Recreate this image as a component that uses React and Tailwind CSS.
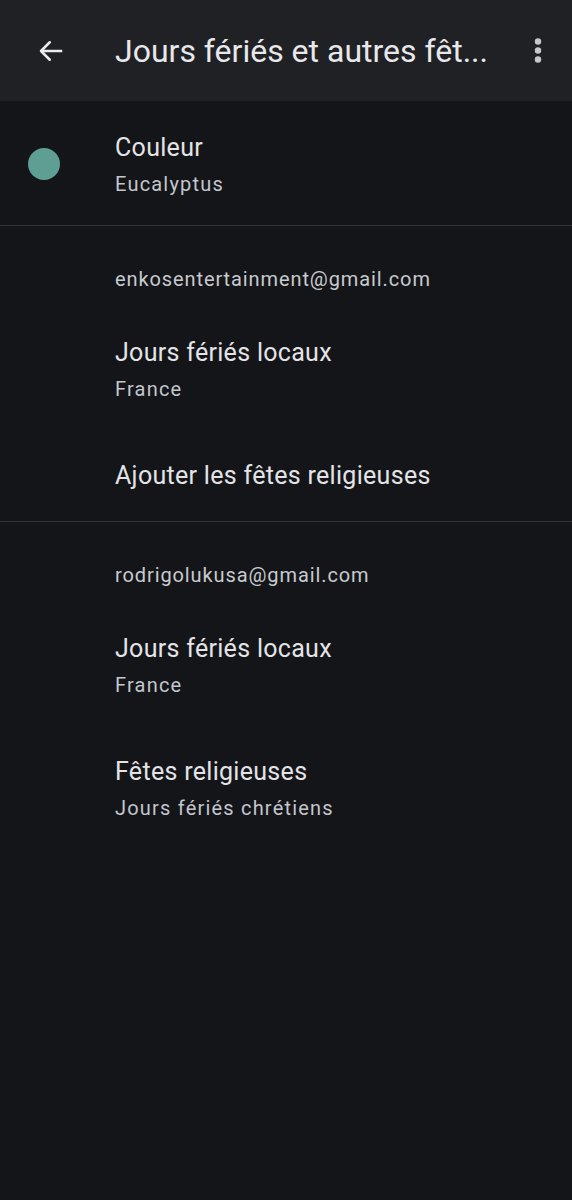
import React from "react";

function Item({ title, sub, className = "" }) {
  return (
    <div className={"pl-[115px] pr-4 " + className}>
      <div className="text-[25px] leading-[36px] tracking-[0.3px] text-[#e4e4e7]">{title}</div>
      {sub && <div className="text-[20px] leading-[36px] tracking-[1.2px] text-[#c3c6cc]">{sub}</div>}
    </div>
  );
}

export default function App() {
  return (
    <div
      className="w-[572px] h-[1200px] bg-[#131519] flex flex-col"
      style={{ fontFamily: "Roboto, 'Noto Sans', sans-serif" }}
    >
      <header className="h-[101px] bg-[#1f2125] flex items-center shrink-0">
        <div className="w-[115px] flex items-center pl-[36px]">
          <svg width="30" height="30" viewBox="0 0 24 24" fill="none" stroke="#ececef" strokeWidth="2" strokeLinecap="square">
            <path d="M20 12H5" />
            <path d="M11 5l-7 7 7 7" strokeLinecap="round" strokeLinejoin="round" />
          </svg>
        </div>
        <div className="flex-1 text-[32px] leading-[40px] text-[#e8e8eb] whitespace-nowrap">Jours fériés et autres fêt...</div>
        <div className="w-[70px] flex justify-center pl-[2px]">
          <svg width="8" height="28" viewBox="0 0 8 28">
            <circle cx="4" cy="4.5" r="3.2" fill="#c7c8cc" />
            <circle cx="4" cy="13.5" r="3.2" fill="#c7c8cc" />
            <circle cx="4" cy="22.5" r="3.2" fill="#c7c8cc" />
          </svg>
        </div>
      </header>

      <div className="h-[124px] flex items-start pt-[29px]">
        <div className="w-[115px] flex pl-[28px] pt-[18px]">
          <div className="w-[32px] h-[32px] rounded-full bg-[#5f9e93]" />
        </div>
        <div>
          <div className="text-[25px] leading-[36px] tracking-[0.3px] text-[#e4e4e7]">Couleur</div>
          <div className="text-[20px] leading-[36px] tracking-[1.2px] text-[#c3c6cc]">Eucalyptus</div>
        </div>
      </div>
      <div className="h-px bg-[#33353a]" />

      <section className="h-[295px]">
        <div className="pl-[115px] pt-[41px] text-[20px] leading-[24px] tracking-[0.9px] text-[#c8cace]">enkosentertainment@gmail.com</div>
        <Item className="mt-[44px]" title="Jours fériés locaux" sub="France" />
        <Item className="mt-[51px]" title="Ajouter les fêtes religieuses" />
      </section>
      <div className="h-px bg-[#33353a]" />

      <section>
        <div className="pl-[115px] pt-[41px] text-[20px] leading-[24px] tracking-[0.9px] text-[#c8cace]">rodrigolukusa@gmail.com</div>
        <Item className="mt-[44px]" title="Jours fériés locaux" sub="France" />
        <Item className="mt-[51px]" title="Fêtes religieuses" sub="Jours fériés chrétiens" />
      </section>
    </div>
  );
}
